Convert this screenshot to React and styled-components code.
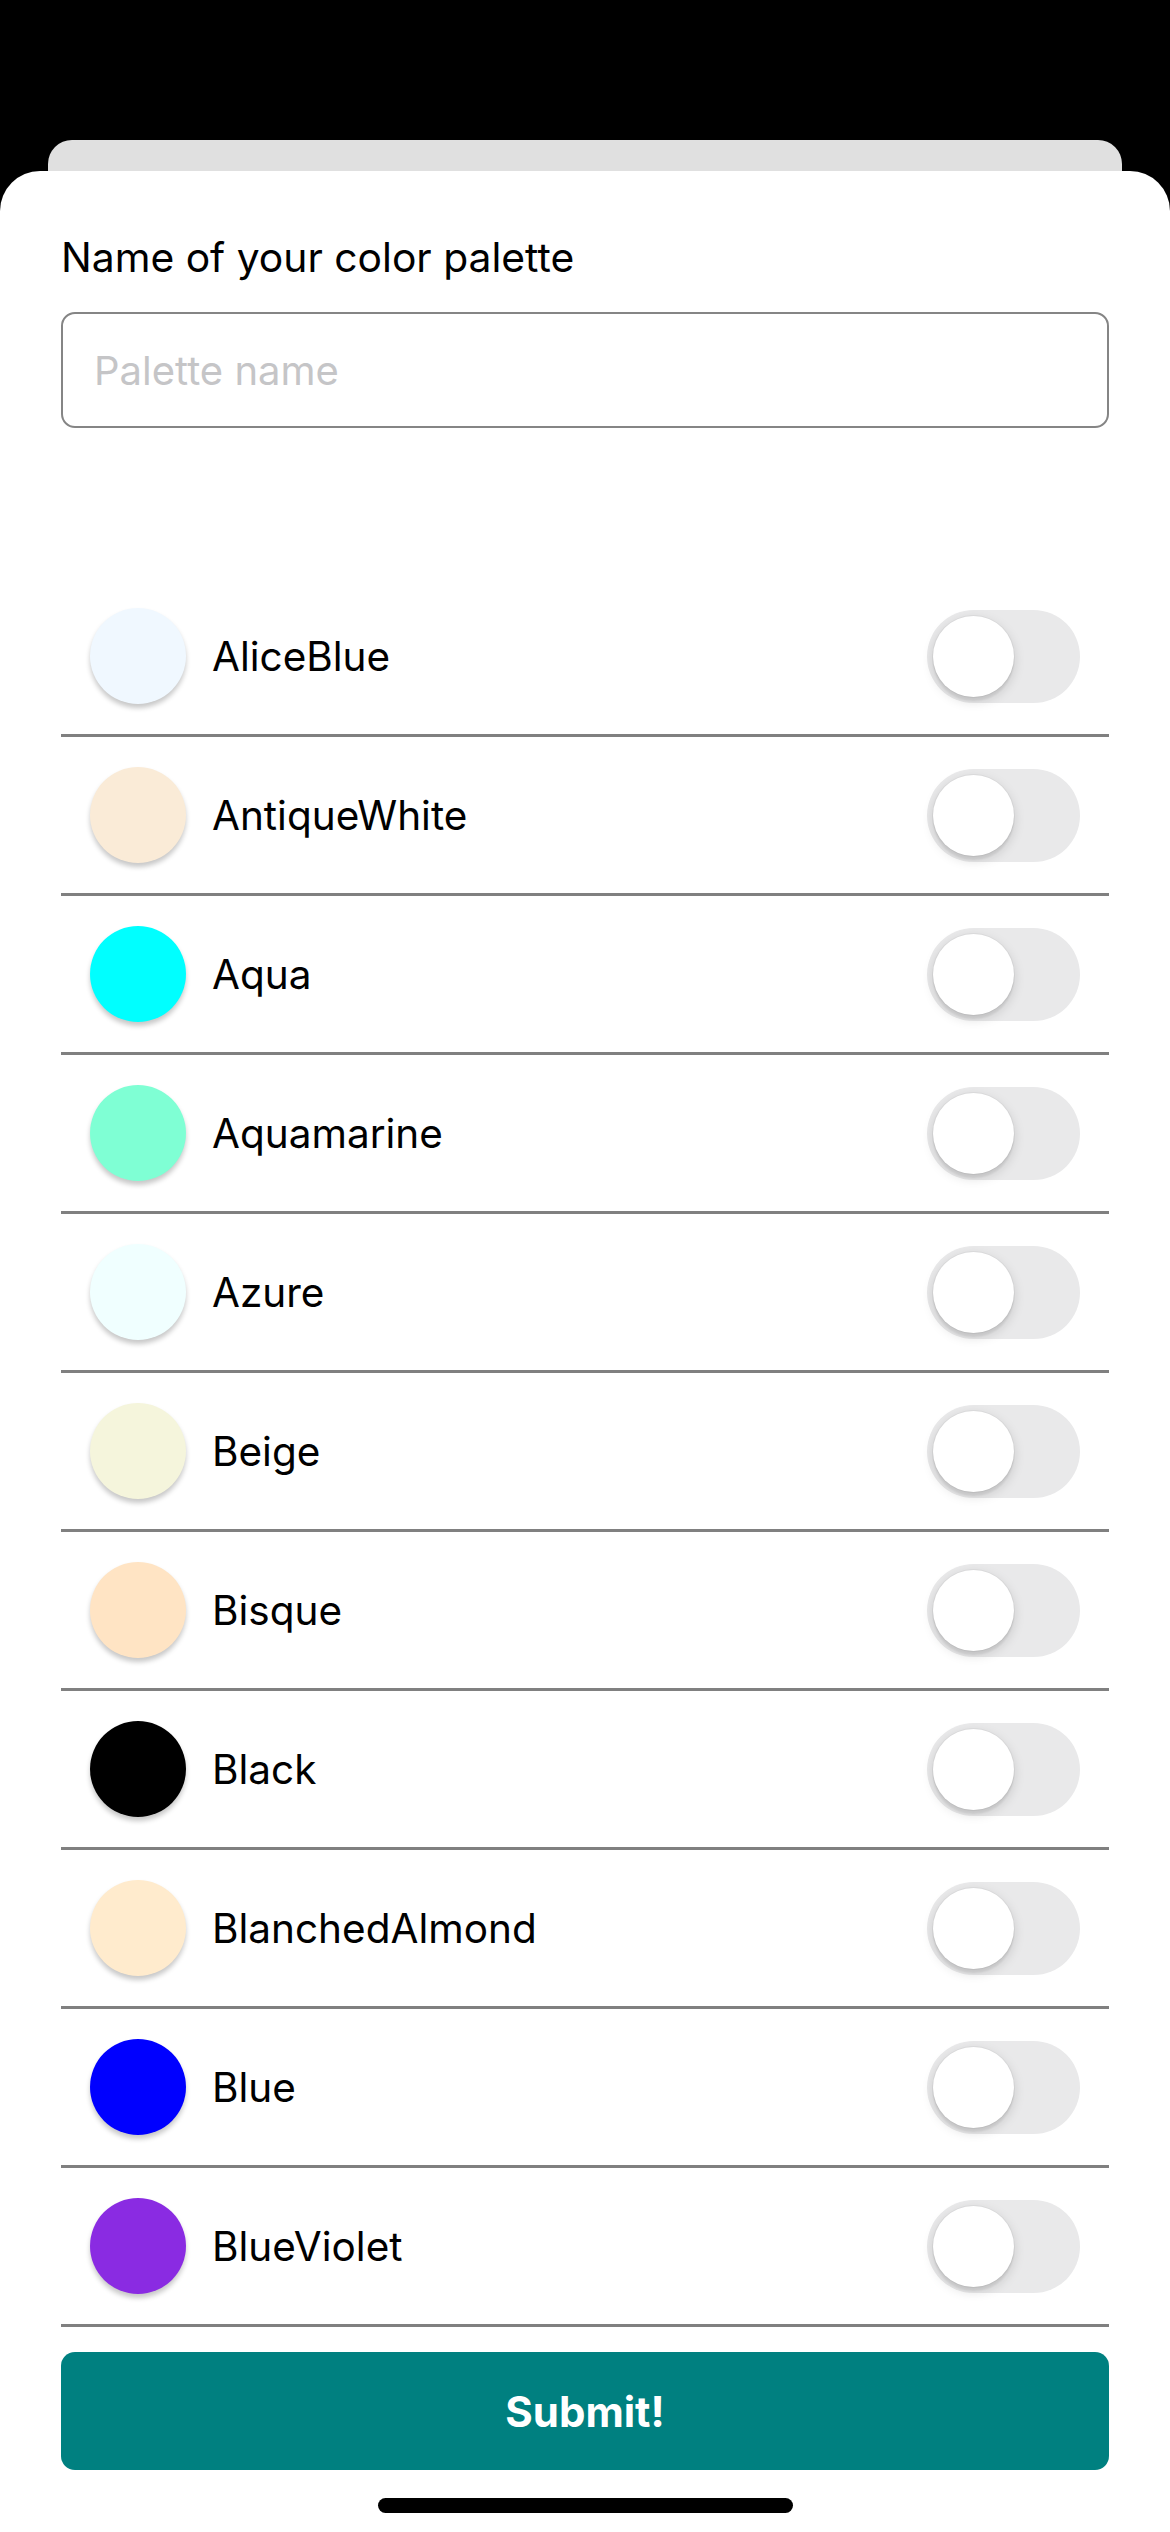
import React, { useState } from 'react';
import styled, { createGlobalStyle } from 'styled-components';

const GlobalStyle = createGlobalStyle`
	html, body {
		margin: 0;
		padding: 0;
		background: #000;
	}
	body {
		font-family: Inter, "Noto Sans", "Liberation Sans", sans-serif;
		-webkit-font-smoothing: antialiased;
	}
	* {
		box-sizing: border-box;
	}
`;

const colors = [
	'AliceBlue',
	'AntiqueWhite',
	'Aqua',
	'Aquamarine',
	'Azure',
	'Beige',
	'Bisque',
	'Black',
	'BlanchedAlmond',
	'Blue',
	'BlueViolet',
];

const Screen = styled.div`
	width: 1170px;
	height: 2532px;
	background: #000;
	padding-top: 140px;
	display: flex;
	flex-direction: column;
	overflow: hidden;
`;

const BackCard = styled.div`
	height: 31px;
	margin: 0 48px;
	background: #e0e0e0;
	border-radius: 24px 24px 0 0;
	flex-shrink: 0;
`;

const Sheet = styled.div`
	flex: 1;
	background: #fff;
	border-radius: 40px 40px 0 0;
	padding: 62px 61px 0;
	display: flex;
	flex-direction: column;
`;

const Label = styled.label`
	font-size: 40.8px;
	line-height: 48px;
	color: #000;
`;

const NameInput = styled.input`
	margin-top: 31px;
	height: 116px;
	width: 100%;
	border: 2px solid #858585;
	border-radius: 14px;
	padding: 0 31px;
	font-family: inherit;
	font-size: 40px;
	color: #000;
	outline: none;
	background: #fff;

	&::placeholder {
		color: #c5c5c7;
	}
`;

const List = styled.ul`
	list-style: none;
	margin: 150px 0 0;
	padding: 0;
`;

const Row = styled.li`
	height: 159px;
	display: flex;
	align-items: center;
	padding: 0 29px;
	border-bottom: 3px solid #808080;
`;

const Swatch = styled.span`
	width: 96px;
	height: 96px;
	border-radius: 50%;
	background: ${(p) => p.$color};
	box-shadow: 0 4px 5px rgba(0, 0, 0, 0.22);
	flex-shrink: 0;
`;

const ColorName = styled.span`
	flex: 1;
	margin-left: 26px;
	font-size: 40.5px;
	color: #000;
`;

const Track = styled.button`
	width: 153px;
	height: 93px;
	border: none;
	border-radius: 47px;
	padding: 6px;
	display: flex;
	align-items: center;
	justify-content: ${(p) => (p.$on ? 'flex-end' : 'flex-start')};
	background: ${(p) => (p.$on ? '#34c759' : '#e9e9ea')};
	cursor: pointer;
	flex-shrink: 0;
`;

const Thumb = styled.span`
	width: 81px;
	height: 81px;
	border-radius: 50%;
	background: #fff;
	box-shadow: 0 0 0 1px rgba(0, 0, 0, 0.04), 0 4px 12px rgba(0, 0, 0, 0.15), 0 4px 2px rgba(0, 0, 0, 0.06);
`;

const SubmitButton = styled.button`
	margin-top: 25px;
	height: 118px;
	width: 100%;
	border: none;
	border-radius: 14px;
	background: #008080;
	color: #fff;
	font-family: inherit;
	font-size: 42px;
	font-weight: 700;
	cursor: pointer;
`;

const HomeIndicator = styled.div`
	margin: 28px auto 0;
	width: 415px;
	height: 15px;
	border-radius: 8px;
	background: #000;
`;

export default function App() {
	const [name, setName] = useState('');
	const [selected, setSelected] = useState({});

	const toggle = (color) => {
		setSelected((prev) => ({ ...prev, [color]: !prev[color] }));
	};

	return (
		<>
			<GlobalStyle />
			<Screen>
				<BackCard />
				<Sheet>
					<Label htmlFor='palette-name'>Name of your color palette</Label>
					<NameInput
						id='palette-name'
						placeholder='Palette name'
						value={name}
						onChange={(e) => setName(e.target.value)}
					/>
					<List>
						{colors.map((color) => (
							<Row key={color}>
								<Swatch $color={color} />
								<ColorName>{color}</ColorName>
								<Track $on={!!selected[color]} onClick={() => toggle(color)}>
									<Thumb />
								</Track>
							</Row>
						))}
					</List>
					<SubmitButton>Submit!</SubmitButton>
					<HomeIndicator />
				</Sheet>
			</Screen>
		</>
	);
}
